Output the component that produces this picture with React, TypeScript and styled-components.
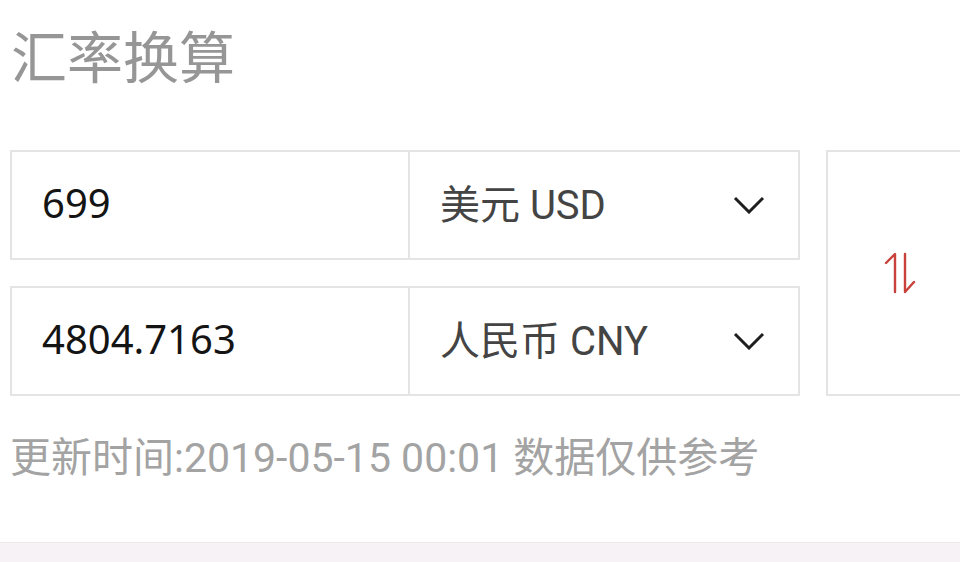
import React from "react";
import styled, { createGlobalStyle } from "styled-components";

const Global = createGlobalStyle`
  html, body { margin: 0; padding: 0; background: #ffffff; }
  body { overflow: hidden; }
`;

const Page = styled.div`
  width: 960px;
  height: 562px;
  overflow: hidden;
  display: flex;
  flex-direction: column;
  background: #ffffff;
`;

const Content = styled.div`
  padding-left: 10px;
  display: flex;
  flex-direction: column;
`;

const Title = styled.h1`
  margin: 26px 0 0 1px;
  font-family: "Noto Sans CJK SC", sans-serif;
  font-weight: 400;
  font-size: 56px;
  line-height: 56px;
  height: 56px;
  color: #969696;
`;

const Converter = styled.div`
  margin-top: 68px;
  display: flex;
  gap: 26px;
  width: 990px;
`;

const Rows = styled.div`
  width: 790px;
  display: flex;
  flex-direction: column;
  gap: 26px;
`;

const Row = styled.div`
  box-sizing: border-box;
  height: 110px;
  border: 2px solid #e4e4e4;
  display: grid;
  grid-template-columns: 396px 1fr;
`;

const Amount = styled.div`
  display: flex;
  align-items: center;
  padding: 0 0 5px 30px;
  font-family: "Noto Sans", sans-serif;
  font-size: 40px;
  color: #141414;
`;

const Select = styled.div`
  border-left: 2px solid #e4e4e4;
  display: flex;
  align-items: center;
  justify-content: space-between;
  padding: 0 33px 0 30px;
  font-family: Roboto, "Noto Sans CJK SC", sans-serif;
  font-size: 40px;
  color: #444444;
`;

const Label = styled.span`
  padding-bottom: 7px;
`;

const Chevron = styled.svg`
  width: 32px;
  height: 18px;
  flex: none;
`;

const SwapBox = styled.div`
  box-sizing: border-box;
  width: 170px;
  height: 246px;
  border: 2px solid #e4e4e4;
  display: flex;
  align-items: center;
  padding-left: 56px;
`;

const SwapIcon = styled.svg`
  width: 32px;
  height: 42px;
`;

const Footer = styled.div`
  margin-top: 42px;
  font-family: Roboto, "Noto Sans CJK SC", sans-serif;
  font-size: 41px;
  line-height: 41px;
  color: #a3a3a3;
  white-space: nowrap;
`;

const Strip = styled.div`
  margin-top: auto;
  height: 19px;
  border-top: 1px solid #ece8eb;
  background: #f6f2f5;
`;

const ChevronDown = () => (
  <Chevron viewBox="0 0 32 18">
    <polyline points="2,2 16,16 30,2" fill="none" stroke="#1e1e1e" strokeWidth="3" />
  </Chevron>
);

const rows = [
  { amount: "699", currency: "美元 USD" },
  { amount: "4804.7163", currency: "人民币 CNY" },
];

export default function App() {
  return (
    <>
      <Global />
      <Page>
        <Content>
          <Title>汇率换算</Title>
          <Converter>
            <Rows>
              {rows.map((r) => (
                <Row key={r.currency}>
                  <Amount>{r.amount}</Amount>
                  <Select>
                    <Label>{r.currency}</Label>
                    <ChevronDown />
                  </Select>
                </Row>
              ))}
            </Rows>
            <SwapBox>
              <SwapIcon viewBox="0 0 32 42">
                <g fill="none" stroke="#c8413a" strokeWidth="2.4" strokeLinecap="round" strokeLinejoin="round">
                  <polyline points="2,11 11,2 11,40" />
                  <polyline points="21,2 21,40 30,30" />
                </g>
              </SwapIcon>
            </SwapBox>
          </Converter>
          <Footer>更新时间:2019-05-15 00:01 数据仅供参考</Footer>
        </Content>
        <Strip />
      </Page>
    </>
  );
}
